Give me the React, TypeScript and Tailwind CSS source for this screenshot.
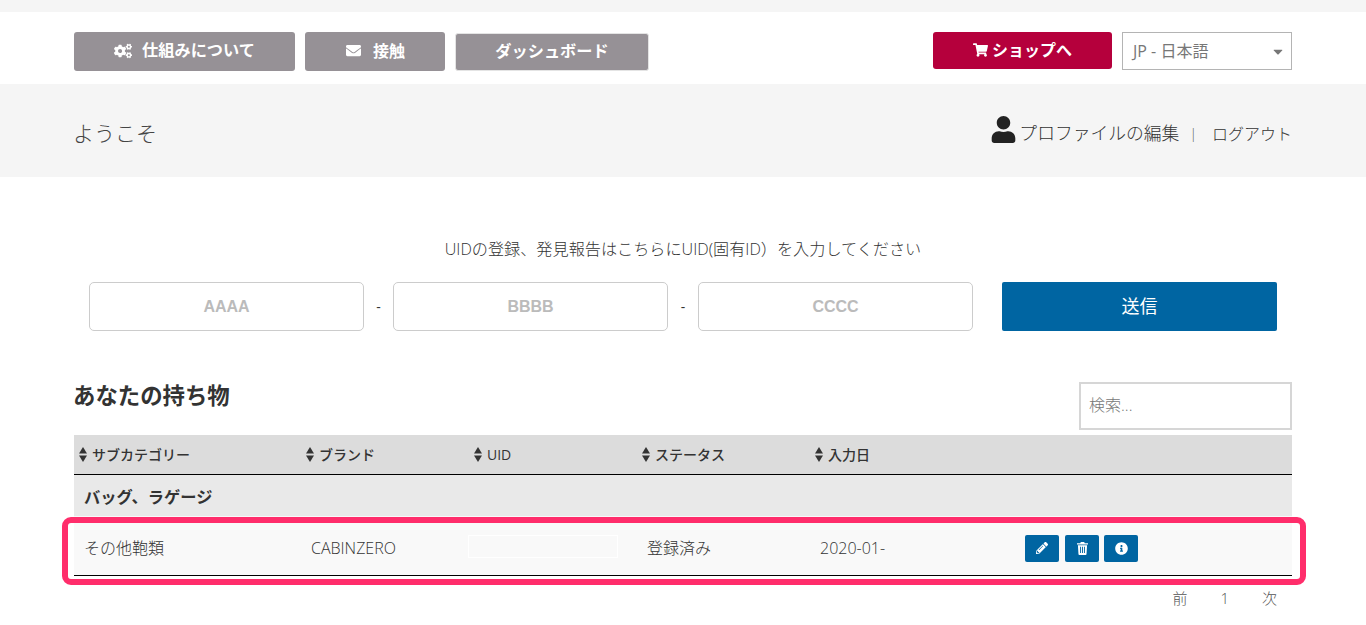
import { FaCaretDown, FaCogs, FaEnvelope, FaInfoCircle, FaPencilAlt, FaShoppingCart, FaUser } from "react-icons/fa";

const font = "font-['Open_Sans','Noto_Sans_CJK_JP',sans-serif]";

function SortIcon() {
  return (
    <svg viewBox="0 0 8 15" className="h-[15px] w-[8px] shrink-0 fill-[#333]">
      <path d="M4 0 8 6.6H0Z" />
      <path d="M0 8.4h8L4 15Z" />
    </svg>
  );
}

function TrashIcon() {
  return (
    <svg viewBox="0 0 12 14" className="h-[13px] w-[11px] fill-white">
      <path d="M4.2 0h3.6l.7 1.4H12v1.3H0V1.4h3.5Z" />
      <path d="M1 3.4h10l-.6 9.6a1 1 0 0 1-1 1H2.600a1 1 0 0 1-1-1ZM3.400 5v7h1V5Zm2.100 0v7h1V5Zm2.100 0v7h1V5Z" fillRule="evenodd" />
    </svg>
  );
}

function SortHead({ label }: { label: string }) {
  return (
    <div className="flex items-center gap-[5px] pl-[5px] text-[14px] font-medium text-[#333]">
      <SortIcon />
      <span>{label}</span>
    </div>
  );
}

function UidInput({ label }: { label: string }) {
  return (
    <div className="flex h-[49px] w-[275px] items-center justify-center rounded-[5px] border border-[#ccc] font-['Liberation_Sans',sans-serif] text-[16px] font-bold text-[#bbb]">
      {label}
    </div>
  );
}

function IconBtn({ children }: { children: React.ReactNode }) {
  return (
    <button className="flex h-[27px] w-[34px] items-center justify-center rounded-[2px] bg-[#0065a2] text-white">
      {children}
    </button>
  );
}

export default function App() {
  return (
    <div className={`${font} relative h-[625px] overflow-hidden bg-white text-[#333]`}>
      <div className="h-3 bg-[#f5f5f5]" />

      <header className="flex h-[72px] justify-between px-[74px] pt-5">
        <nav className="flex items-start">
          <a className="flex h-[39px] w-[221px] items-center justify-center gap-[10px] rounded-[3px] bg-[#969196] pb-[2px] text-[16.2px] font-bold text-white">
            <FaCogs className="h-[16px] w-[18px]" />
            仕組みについて
          </a>
          <a className="ml-[10px] flex h-[39px] w-[140px] items-center justify-center gap-[11px] rounded-[3px] bg-[#969196] pb-[2px] text-[16px] font-bold text-white">
            <FaEnvelope className="h-[15px] w-[17px]" />
            接触
          </a>
          <a className="ml-[10px] mt-px flex h-[38px] w-[194px] items-center justify-center rounded-[3px] border border-[#e4e4e4] bg-[#969196] pb-[2px] text-[16.2px] font-bold text-white">
            ダッシュボード
          </a>
        </nav>
        <div className="flex items-start">
          <a className="flex h-[37px] w-[179px] items-center justify-center gap-1 rounded-[3px] bg-[#b5003c] pb-[2px] text-[16px] font-bold text-white">
            <FaShoppingCart className="h-[14px] w-[15px]" />
            ショップへ
          </a>
          <div className="ml-[10px] flex h-[38px] w-[170px] items-center justify-between border border-[#b4b4b4] pl-[10px] pr-[7px] text-[16px] text-[#777]">
            <span>JP - 日本語</span>
            <FaCaretDown className="h-[15px] w-[12px] text-[#777]" />
          </div>
        </div>
      </header>

      <section className="flex h-[93px] items-center justify-between bg-[#f5f5f5] px-[74px] pt-[6px]">
        <h1 className="-ml-px text-[21px] font-light text-[#444]">ようこそ</h1>
        <div className="flex items-center text-[16px] font-light text-[#333]">
          <FaUser className="mb-[9px] mr-[3px] h-[27px] w-[25px] text-[#222]" />
          <span className="text-[17.800px]">プロファイルの編集</span>
          <span className="ml-[10px] mr-[15px] text-[14px] text-[#555]">|</span>
          <span>ログアウト</span>
        </div>
      </section>

      <section className="px-[89px] pt-[61px]">
        <p className="text-center text-[16.150px] leading-[22px] font-light text-[#333]">
          UIDの登録、発見報告はこちらにUID(固有ID）を入力してください
        </p>
        <div className="mt-[22px] flex items-center">
          <UidInput label="AAAA" />
          <span className="w-[29px] text-center text-[14px]">-</span>
          <UidInput label="BBBB" />
          <span className="w-[30px] text-center text-[14px]">-</span>
          <UidInput label="CCCC" />
          <button className="ml-[29px] h-[49px] w-[275px] rounded-[2px] bg-[#0065a2] text-[18px] text-white">送信</button>
        </div>
      </section>

      <section className="px-[74px] pt-[51px]">
        <div className="flex h-[53px] items-start justify-between">
          <h2 className="-ml-px text-[22.400px] leading-[28px] font-bold text-[#333]">あなたの持ち物</h2>
          <div className="flex h-[48px] w-[213px] items-center border-2 border-[#d6d6d6] pb-[3px] pl-2 text-[16px] font-light text-[#777]">
            検索...
          </div>
        </div>

        <div className="grid h-[40px] grid-cols-[227px_168px_168px_173px_205px_1fr] items-center border-b border-black bg-[#dcdcdc]">
          <SortHead label="サブカテゴリー" />
          <SortHead label="ブランド" />
          <SortHead label="UID" />
          <SortHead label="ステータス" />
          <SortHead label="入力日" />
          <div />
        </div>

        <div className="flex h-[41px] items-center bg-[#e9e9e9] pl-[10px] pt-[3px] text-[16.250px] font-bold text-[#333]">バッグ、ラゲージ</div>

        <div className="grid h-[60px] grid-cols-[227px_168px_168px_173px_205px_1fr] items-center border-b border-black bg-[#f9f9f9] pt-[5px] text-[16px] font-light text-[#333]">
          <div className="pl-[10px]">その他鞄類</div>
          <div className="pl-[10px]">CABINZERO</div>
          <div className="-ml-px -mt-[3px]">
            <div className="h-[23px] w-[150px] border border-white" />
          </div>
          <div className="pl-[10px]">登録済み</div>
          <div className="pl-[10px]">2020-01-</div>
          <div className="flex pl-[10px]">
            <IconBtn><FaPencilAlt className="h-[12px] w-[12px]" /></IconBtn>
            <div className="ml-[6px]"><IconBtn><TrashIcon /></IconBtn></div>
            <div className="ml-[5px]"><IconBtn><FaInfoCircle className="h-[13px] w-[13px]" /></IconBtn></div>
          </div>
        </div>

        <div className="flex justify-end gap-[33px] pr-[15px] pt-[12px] text-[15px] leading-[20px] font-light text-[#555]">
          <span>前</span>
          <span>1</span>
          <span>次</span>
        </div>
      </section>

      {/* annotation drawn over the row */}
      <div className="absolute left-[62px] top-[517px] h-[68px] w-[1244px] rounded-[9px] border-[6px] border-[#ff2d6b]" />
    </div>
  );
}
